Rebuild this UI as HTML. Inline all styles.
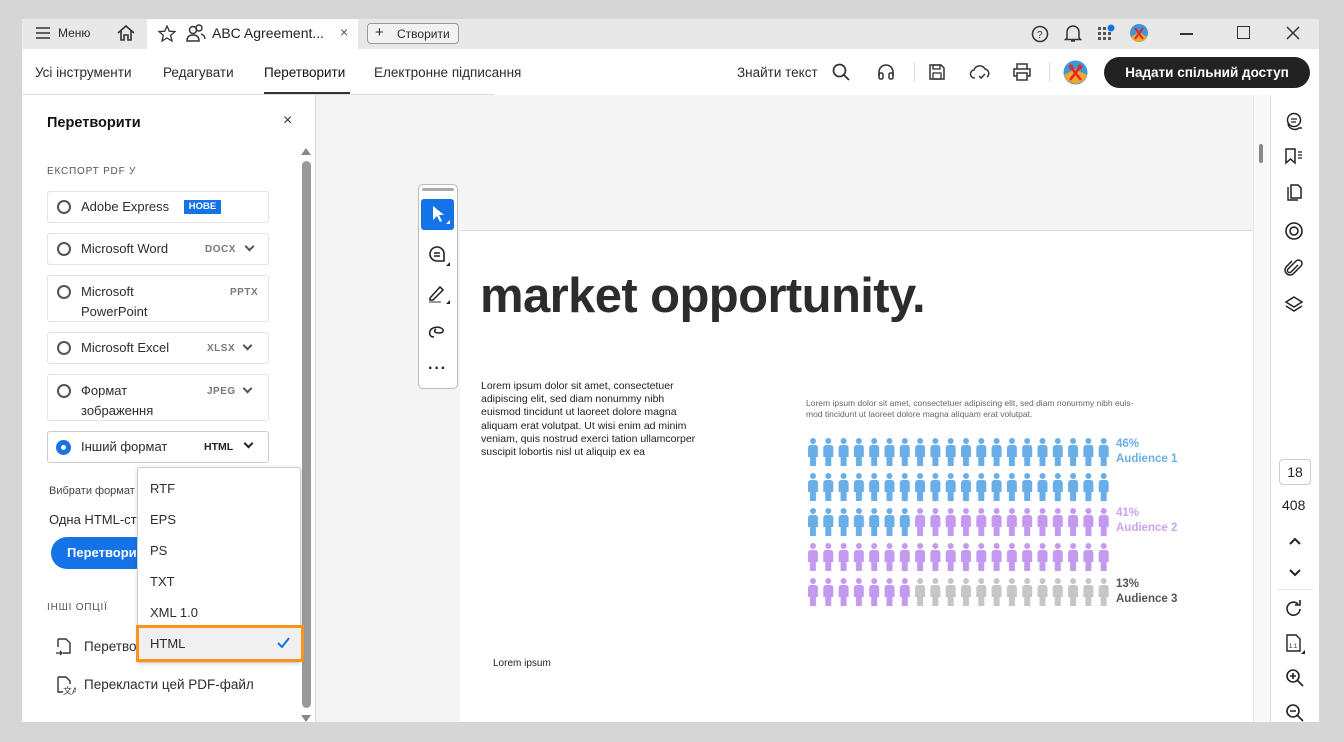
<!DOCTYPE html>
<html><head><meta charset="utf-8"><style>
*{margin:0;padding:0;box-sizing:border-box}
body{width:1344px;height:742px;background:#d6d6d6;font-family:"Liberation Sans","DejaVu Sans",sans-serif;position:relative;overflow:hidden;color:#222}
.a{position:absolute}
.t{font-size:13px;color:#2c2c2c}
.card{position:absolute;left:47px;width:222px;border:1px solid #e3e3e3;border-radius:3px;background:#fff}
.rad{position:absolute;left:9px;width:14px;height:14px;border:2px solid #555;border-radius:50%}
.cl{position:absolute;left:33px;font-size:13px;color:#2c2c2c;line-height:20px}
.fmt{position:absolute;font-size:10px;color:#777;font-weight:bold;letter-spacing:.5px}
.chev{position:absolute;width:7px;height:7px;border-right:2px solid #555;border-bottom:2px solid #555;transform:rotate(45deg)}
.mi{position:absolute;left:150px;font-size:13px;color:#2c2c2c}
svg{position:absolute}
</style></head><body>
<div class="a" style="left:22px;top:19px;width:1297px;height:703px;background:#fff"></div>
<div class="a" style="left:22px;top:19px;width:1297px;height:30px;background:#e8e8e8"></div>
<div class="a" style="left:147px;top:19px;width:211px;height:30px;background:#fff"></div>
<svg style="left:36px;top:27px" width="14" height="12"><path d="M0 1H14M0 6H14M0 11H14" stroke="#333" stroke-width="1.5"/></svg>
<div class="a t" style="left:58px;top:26px;font-size:12px">Меню</div>
<svg style="left:116px;top:24px" width="20" height="18" viewBox="0 0 20 18"><path d="M2 9L10 2L18 9M5 7V16H8V11H12V16H15V7" fill="none" stroke="#333" stroke-width="1.6"/></svg>
<svg style="left:158px;top:25px" width="18" height="17" viewBox="0 0 18 17"><path d="M9 1L11.3 6.2L17 6.6L12.6 10.3L14 16L9 13L4 16L5.4 10.3L1 6.6L6.7 6.2Z" fill="none" stroke="#333" stroke-width="1.3"/></svg>
<svg style="left:186px;top:24px" width="20" height="18" viewBox="0 0 20 18"><circle cx="7" cy="6" r="3.5" fill="none" stroke="#333" stroke-width="1.5"/><path d="M1 17C1 12 4 11 7 11S13 12 13 17Z" fill="none" stroke="#333" stroke-width="1.5"/><circle cx="13" cy="4" r="3" fill="none" stroke="#333" stroke-width="1.4"/><path d="M15 10C18 11 19 13 19 15" fill="none" stroke="#333" stroke-width="1.4"/></svg>
<div class="a t" style="left:212px;top:25px;font-size:14px;color:#222">ABC Agreement...</div>
<div class="a" style="left:340px;top:24px;font-size:14px;color:#555">×</div>
<div class="a" style="left:367px;top:23px;width:92px;height:21px;border:1px solid #999;border-radius:4px;background:#f2f2f2"></div>
<div class="a t" style="left:375px;top:24px;font-size:15px">+</div>
<div class="a t" style="left:397px;top:27px;font-size:12px">Створити</div>
<svg style="left:1031px;top:25px" width="18" height="18"><circle cx="9" cy="9" r="7.5" fill="none" stroke="#333" stroke-width="1.5"/><text x="6" y="13" font-size="10" font-family="Liberation Sans" fill="#333">?</text></svg>
<svg style="left:1064px;top:24px" width="18" height="19" viewBox="0 0 18 19"><path d="M3 14V8A6 6 0 0 1 15 8V14L16.5 15.5H1.5Z M7 17H11" fill="none" stroke="#333" stroke-width="1.5"/></svg>
<svg style="left:1097px;top:24px" width="20" height="18"><g fill="#555"><rect x="1" y="3" width="3" height="3"/><rect x="6" y="3" width="3" height="3"/><rect x="1" y="8" width="3" height="3"/><rect x="6" y="8" width="3" height="3"/><rect x="11" y="8" width="3" height="3"/><rect x="1" y="13" width="3" height="3"/><rect x="6" y="13" width="3" height="3"/><rect x="11" y="13" width="3" height="3"/></g><circle cx="14" cy="4" r="3.5" fill="#1473e6"/></svg>
<svg style="left:1129px;top:23px" width="20" height="20"><circle cx="10" cy="10" r="9" fill="#3a9ad9"/><path d="M2 14L10 9L18 14A9 9 0 0 1 2 14Z" fill="#f2a62a"/><path d="M6 5L14 16M14 5L6 16" stroke="#e22" stroke-width="2"/></svg>
<div class="a" style="left:1180px;top:33px;width:13px;height:1.5px;background:#333"></div>
<div class="a" style="left:1237px;top:26px;width:13px;height:13px;border:1.5px solid #333"></div>
<svg style="left:1286px;top:26px" width="14" height="14"><path d="M1 1L13 13M13 1L1 13" stroke="#333" stroke-width="1.5"/></svg>

<div class="a t" style="left:35px;top:65px;font-size:13.5px">Усі інструменти</div>
<div class="a t" style="left:163px;top:65px;font-size:13.5px">Редагувати</div>
<div class="a t" style="left:264px;top:65px;font-size:13.5px;color:#111">Перетворити</div>
<div class="a" style="left:264px;top:92px;width:86px;height:2px;background:#333"></div>
<div class="a t" style="left:374px;top:65px;font-size:13.5px">Електронне підписання</div>
<div class="a" style="left:22px;top:94px;width:472px;height:1px;background:#ddd"></div>
<div class="a t" style="left:737px;top:65px;font-size:13.5px">Знайти текст</div>
<svg style="left:832px;top:63px" width="18" height="18"><circle cx="7.5" cy="7.5" r="6" fill="none" stroke="#333" stroke-width="1.7"/><path d="M12 12L17 17" stroke="#333" stroke-width="1.8"/></svg>
<svg style="left:877px;top:63px" width="18" height="17"><path d="M2 13V9A7 7 0 0 1 16 9V13" fill="none" stroke="#333" stroke-width="1.6"/><rect x="2" y="10" width="4" height="6" rx="1.5" fill="none" stroke="#333" stroke-width="1.5"/><rect x="12" y="10" width="4" height="6" rx="1.5" fill="none" stroke="#333" stroke-width="1.5"/></svg>
<div class="a" style="left:914px;top:62px;width:1px;height:20px;background:#ddd"></div>
<svg style="left:928px;top:63px" width="18" height="18"><path d="M2 2H13L16 5V16H2Z" fill="none" stroke="#333" stroke-width="1.5"/><rect x="5" y="2" width="7" height="4" fill="none" stroke="#333" stroke-width="1.3"/><rect x="5" y="10" width="8" height="6" fill="none" stroke="#333" stroke-width="1.3"/></svg>
<svg style="left:969px;top:63px" width="22" height="18"><path d="M6 15A4 4 0 0 1 5 7A6 6 0 0 1 16 6A4.5 4.5 0 0 1 18 14" fill="none" stroke="#333" stroke-width="1.5"/><path d="M10 13L12 15L16 11" fill="none" stroke="#333" stroke-width="1.5"/></svg>
<svg style="left:1012px;top:63px" width="20" height="18"><path d="M5 6V1H15V6M5 13H2V6H18V13H15M5 10H15V17H5Z" fill="none" stroke="#333" stroke-width="1.5"/></svg>
<div class="a" style="left:1049px;top:62px;width:1px;height:20px;background:#ddd"></div>
<svg style="left:1063px;top:60px" width="25" height="25"><circle cx="12.5" cy="12.5" r="12" fill="#3a9ad9"/><path d="M1 15L12.5 9L24 15A12 12 0 0 1 1 15Z" fill="#f2a62a"/><path d="M7 6L18 20M18 6L7 20" stroke="#e22" stroke-width="2.5"/><circle cx="8" cy="7" r="2.5" fill="#c33"/><circle cx="17" cy="7" r="2.5" fill="#c33"/></svg>
<div class="a" style="left:1104px;top:57px;width:206px;height:31px;border-radius:16px;background:#222;color:#fff;font-size:13.5px;font-weight:bold;text-align:center;line-height:31px">Надати спільний доступ</div>

<div class="a" style="left:315px;top:95px;width:1px;height:627px;background:#ddd"></div>
<div class="a" style="left:47px;top:115px;font-size:14.5px;font-weight:bold;color:#111">Перетворити</div>
<div class="a" style="left:283px;top:112px;font-size:16px;color:#333">×</div>
<div class="a" style="left:47px;top:166px;font-size:10px;color:#555;letter-spacing:.8px">ЕКСПОРТ PDF У</div>
<div class="a" style="left:301px;top:148px;width:0;height:0;border-left:5px solid transparent;border-right:5px solid transparent;border-bottom:7px solid #888"></div>
<div class="a" style="left:302px;top:161px;width:9px;height:547px;border-radius:5px;background:#999"></div>
<div class="a" style="left:301px;top:715px;width:0;height:0;border-left:5px solid transparent;border-right:5px solid transparent;border-top:7px solid #888"></div>

<div class="card" style="top:191px;height:32px"><div class="rad" style="top:8px"></div><div class="cl" style="top:5px">Adobe Express</div><div class="a" style="left:136px;top:8px;width:37px;height:14px;background:#1473e6;color:#fff;font-size:9.5px;font-weight:bold;text-align:center;line-height:14px">НОВЕ</div></div>
<div class="card" style="top:233px;height:32px"><div class="rad" style="top:8px"></div><div class="cl" style="top:5px">Microsoft Word</div><div class="fmt" style="left:157px;top:10px">DOCX</div><div class="chev" style="left:198px;top:9px"></div></div>
<div class="card" style="top:275px;height:47px"><div class="rad" style="top:9px"></div><div class="cl" style="top:6px">Microsoft<br>PowerPoint</div><div class="fmt" style="left:182px;top:11px">PPTX</div></div>
<div class="card" style="top:332px;height:32px"><div class="rad" style="top:8px"></div><div class="cl" style="top:5px">Microsoft Excel</div><div class="fmt" style="left:159px;top:10px">XLSX</div><div class="chev" style="left:196px;top:9px"></div></div>
<div class="card" style="top:374px;height:47px"><div class="rad" style="top:9px"></div><div class="cl" style="top:6px">Формат<br>зображення</div><div class="fmt" style="left:159px;top:11px">JPEG</div><div class="chev" style="left:196px;top:10px"></div></div>
<div class="card" style="top:431px;height:32px;border-color:#ccc"><div class="a" style="left:8px;top:8px;width:15px;height:15px;border-radius:50%;background:#1473e6"></div><div class="a" style="left:13px;top:13px;width:5px;height:5px;border-radius:50%;background:#fff"></div><div class="cl" style="top:5px">Інший формат</div><div class="a" style="left:156px;top:9px;font-size:10.5px;font-weight:bold;color:#222">HTML</div><div class="chev" style="left:197px;top:8px;border-color:#222"></div></div>

<div class="a" style="left:49px;top:485px;font-size:11px;color:#444">Вибрати формат</div>
<div class="a t" style="left:49px;top:512px">Одна HTML-сто</div>
<div class="a" style="left:51px;top:537px;width:100px;height:32px;border-radius:16px;background:#1473e6;color:#fff;font-size:13px;font-weight:bold;line-height:32px;padding-left:16px">Перетвори</div>
<div class="a" style="left:47px;top:602px;font-size:10px;color:#555;letter-spacing:.8px">ІНШІ ОПЦІЇ</div>
<svg style="left:54px;top:637px" width="20" height="20"><path d="M4 2H12L16 6V16H9M4 2V10" fill="none" stroke="#333" stroke-width="1.4"/><path d="M2 16H8M6 14L8 16L6 18" fill="none" stroke="#333" stroke-width="1.3"/></svg>
<div class="a t" style="left:84px;top:639px;font-size:13.5px">Перетво</div>
<svg style="left:54px;top:675px" width="22" height="20"><path d="M4 2H12L16 6V9M4 2V17H9" fill="none" stroke="#333" stroke-width="1.4"/><text x="9" y="19" font-size="9" font-family="Liberation Sans" fill="#333">文A</text></svg>
<div class="a t" style="left:84px;top:677px;font-size:13.5px">Перекласти цей PDF-файл</div>

<div class="a" style="left:137px;top:467px;width:164px;height:196px;background:#fff;border:1px solid #ccc;border-radius:3px;box-shadow:0 1px 4px rgba(0,0,0,.15)"></div>
<div class="mi" style="top:481px">RTF</div>
<div class="mi" style="top:512px">EPS</div>
<div class="mi" style="top:543px">PS</div>
<div class="mi" style="top:574px">TXT</div>
<div class="mi" style="top:605px">XML 1.0</div>
<div class="a" style="left:136px;top:625px;width:168px;height:37px;border:3px solid #f7941d;background:#f0f0f0"></div>
<div class="mi" style="top:636px">HTML</div>
<svg style="left:277px;top:637px" width="13" height="11"><path d="M1 6L5 10L12 1" fill="none" stroke="#1473e6" stroke-width="2"/></svg>

<div class="a" style="left:316px;top:95px;width:955px;height:627px;background:#f4f4f4"></div>
<div class="a" style="left:460px;top:230px;width:793px;height:492px;background:#fff;border-top:1px solid #ddd"></div>
<div class="a" style="left:1253px;top:95px;width:17px;height:627px;background:#f8f8f8;border-left:1px solid #e8e8e8"></div>
<div class="a" style="left:1259px;top:144px;width:4px;height:19px;background:#888;border-radius:2px"></div>
<div class="a" style="left:418px;top:184px;width:40px;height:205px;background:#fff;border:1px solid #bbb;border-radius:5px"></div>
<div class="a" style="left:422px;top:188px;width:32px;height:3px;background:#aaa;border-radius:2px"></div>
<div class="a" style="left:421px;top:199px;width:33px;height:31px;background:#1473e6;border-radius:3px"></div>
<svg style="left:431px;top:205px" width="20" height="20"><path d="M2 1V15L6 11L9 17L11 16L8 10H13Z" fill="#fff"/><path d="M15 19H19V15Z" fill="#fff"/></svg>
<svg style="left:427px;top:245px" width="24" height="22"><path d="M10 2A7 7 0 1 0 10 16H17V10A7 7 0 0 0 10 2Z" fill="none" stroke="#222" stroke-width="1.6"/><path d="M7 8H13M7 11H13" stroke="#222" stroke-width="1.4"/><path d="M19 21H23V17Z" fill="#222"/></svg>
<svg style="left:427px;top:283px" width="24" height="22"><path d="M3 15L13 4L16 7L6 17H3Z" fill="none" stroke="#222" stroke-width="1.5"/><path d="M2 19H14" stroke="#999" stroke-width="2"/><path d="M19 21H23V17Z" fill="#222"/></svg>
<svg style="left:428px;top:323px" width="18" height="16"><path d="M6 14C2 14 1 11 2 8S9 3 13 5S15 10 11 10S5 8 8 6" fill="none" stroke="#222" stroke-width="1.5"/></svg>
<div class="a" style="left:428px;top:360px;font-size:16px;font-weight:bold;color:#222;letter-spacing:1px">···</div>

<div class="a" style="left:480px;top:268px;font-size:49px;font-weight:bold;color:#2c2c2c;letter-spacing:-0.6px">market opportunity.</div>
<div class="a" style="left:481px;top:380px;font-size:10.5px;line-height:13.2px;color:#222;width:222px">Lorem ipsum dolor sit amet, consectetuer adipiscing elit, sed diam nonummy nibh euismod tincidunt ut laoreet dolore magna aliquam erat volutpat. Ut wisi enim ad minim veniam, quis nostrud exerci tation ullamcorper suscipit lobortis nisl ut aliquip ex ea</div>
<div class="a" style="left:806px;top:398px;font-size:8.5px;line-height:10.5px;color:#666;width:336px">Lorem ipsum dolor sit amet, consectetuer adipiscing elit, sed diam nonummy nibh euis-mod tincidunt ut laoreet dolore magna aliquam erat volutpat.</div>
<div class="a" style="left:493px;top:658px;font-size:10px;color:#222">Lorem ipsum</div>
<svg style="left:0;top:0" width="1344" height="742">
<defs>
<pattern id="pb" x="806" y="437" width="15.3" height="35" patternUnits="userSpaceOnUse"><circle cx="7" cy="4" r="3" fill="#6aaee8"/><path d="M2 11Q2 8 5 8H9Q12 8 12 11V20H10V29H4V20H2Z" fill="#6aaee8"/></pattern>
<pattern id="pp" x="806" y="437" width="15.3" height="35" patternUnits="userSpaceOnUse"><circle cx="7" cy="4" r="3" fill="#c49af0"/><path d="M2 11Q2 8 5 8H9Q12 8 12 11V20H10V29H4V20H2Z" fill="#c49af0"/></pattern>
<pattern id="pg" x="806" y="437" width="15.3" height="35" patternUnits="userSpaceOnUse"><circle cx="7" cy="4" r="3" fill="#c6c6c6"/><path d="M2 11Q2 8 5 8H9Q12 8 12 11V20H10V29H4V20H2Z" fill="#c6c6c6"/></pattern>
</defs>
<rect x="806" y="437" width="306" height="70" fill="url(#pb)"/>
<rect x="806" y="507" width="107" height="35" fill="url(#pb)"/>
<rect x="913" y="507" width="199" height="35" fill="url(#pp)"/>
<rect x="806" y="542" width="306" height="35" fill="url(#pp)"/>
<rect x="806" y="577" width="107" height="35" fill="url(#pp)"/>
<rect x="913" y="577" width="199" height="35" fill="url(#pg)"/>
</svg>
<div class="a" style="left:1116px;top:437px;font-size:11.5px;line-height:15px;color:#6aaee8;font-weight:bold">46%<br>Audience 1</div>
<div class="a" style="left:1116px;top:506px;font-size:11.5px;line-height:15px;color:#c9a6ef;font-weight:bold">41%<br>Audience 2</div>
<div class="a" style="left:1116px;top:577px;font-size:11.5px;line-height:15px;color:#555;font-weight:bold">13%<br>Audience 3</div>

<div class="a" style="left:1270px;top:95px;width:1px;height:627px;background:#e0e0e0"></div>
<svg style="left:1284px;top:111px" width="20" height="20"><circle cx="10" cy="9" r="6.5" fill="none" stroke="#222" stroke-width="1.5"/><path d="M4 13A7 7 0 0 0 15 17H18" fill="none" stroke="#222" stroke-width="1.5"/><path d="M7 8H13M7 11H12" stroke="#222" stroke-width="1.3"/></svg>
<svg style="left:1284px;top:147px" width="20" height="18"><path d="M2 2H11V16L6.5 12L2 16Z" fill="none" stroke="#222" stroke-width="1.5"/><path d="M14 5H18M14 8H18M14 11H18" stroke="#222" stroke-width="1.3"/></svg>
<svg style="left:1284px;top:183px" width="20" height="20"><path d="M4 4V17H14" fill="none" stroke="#222" stroke-width="1.4"/><path d="M7 2H14L17 5V15H7Z" fill="none" stroke="#222" stroke-width="1.5"/></svg>
<svg style="left:1284px;top:221px" width="20" height="20"><circle cx="10" cy="10" r="8" fill="none" stroke="#222" stroke-width="1.6"/><circle cx="10" cy="10" r="4" fill="none" stroke="#222" stroke-width="1.6"/></svg>
<svg style="left:1284px;top:258px" width="20" height="20"><path d="M14 7L7 14A2 2 0 0 1 4 11L12 3A3.5 3.5 0 0 1 17 8L9 16A5 5 0 0 1 2 9L8 3" fill="none" stroke="#222" stroke-width="1.5"/></svg>
<svg style="left:1284px;top:295px" width="20" height="20"><path d="M10 2L18 7L10 12L2 7Z" fill="none" stroke="#222" stroke-width="1.5"/><path d="M2 11L10 16L18 11" fill="none" stroke="#222" stroke-width="1.5"/></svg>
<div class="a" style="left:1279px;top:459px;width:32px;height:26px;border:1px solid #ccc;border-radius:4px;font-size:14px;text-align:center;line-height:24px;color:#222">18</div>
<div class="a" style="left:1282px;top:497px;font-size:14px;color:#222">408</div>
<svg style="left:1288px;top:536px" width="14" height="10"><path d="M2 8L7 3L12 8" fill="none" stroke="#222" stroke-width="2"/></svg>
<svg style="left:1288px;top:568px" width="14" height="10"><path d="M2 2L7 7L12 2" fill="none" stroke="#222" stroke-width="2"/></svg>
<div class="a" style="left:1277px;top:589px;width:36px;height:1px;background:#e6e6e6"></div>
<svg style="left:1284px;top:599px" width="20" height="20"><path d="M16 10A6.5 6.5 0 1 1 14 5" fill="none" stroke="#222" stroke-width="1.6"/><path d="M11 4H16V-1" fill="none" stroke="#222" stroke-width="1.6" transform="translate(0 2)"/></svg>
<svg style="left:1284px;top:633px" width="22" height="22"><path d="M3 2H12L16 6V18H3Z" fill="none" stroke="#222" stroke-width="1.4"/><text x="5" y="15" font-size="6" font-family="Liberation Sans" fill="#222">1:1</text><path d="M17 21H21V17Z" fill="#222"/></svg>
<svg style="left:1285px;top:668px" width="20" height="20"><circle cx="8" cy="8" r="6" fill="none" stroke="#222" stroke-width="1.6"/><path d="M12.5 12.5L18 18M5 8H11M8 5V11" stroke="#222" stroke-width="1.6"/></svg>
<svg style="left:1285px;top:703px" width="20" height="19"><circle cx="8" cy="8" r="6" fill="none" stroke="#222" stroke-width="1.6"/><path d="M12.5 12.5L18 18M5 8H11" stroke="#222" stroke-width="1.6"/></svg>
</body></html>
